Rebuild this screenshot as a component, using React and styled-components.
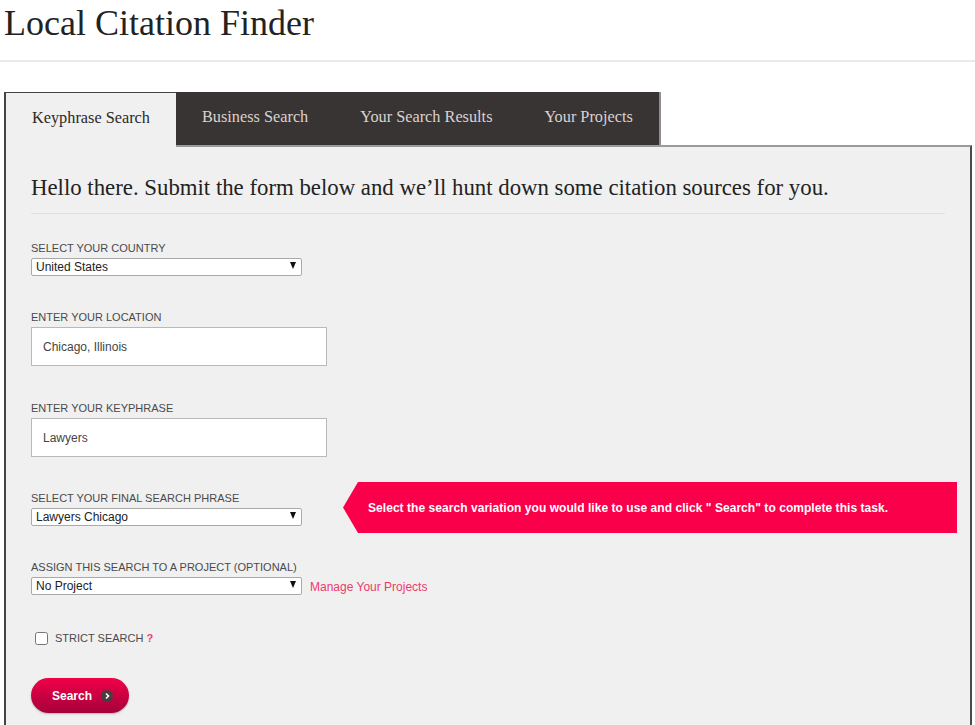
import React from 'react'
import styled, { createGlobalStyle } from 'styled-components'

const GlobalStyle = createGlobalStyle`
    body {
        margin: 0;
        background: #ffffff;
        font-family: "Liberation Sans", Arial, sans-serif;
    }
`

const Page = styled.div`
    width: 975px;
`

const Header = styled.header`
    border-bottom: 2px solid #e8ebeb;
    padding: 0 0 14px 4px;
`

const Title = styled.h1`
    margin: 0;
    font-family: "Liberation Serif", serif;
    font-weight: 400;
    font-size: 36px;
    line-height: 46px;
    color: #222;
`

const Main = styled.main`
    padding: 30px 3px 0 4px;
`

const TabList = styled.nav`
    display: flex;
    width: fit-content;
    border-right: 2px solid #8e8e8e;
    position: relative;
    z-index: 1;
`

const Tab = styled.div`
    padding: 0 26px 4px;
    display: flex;
    align-items: center;
    font-family: "Liberation Serif", serif;
    font-size: 16.3px;
    color: ${({ $active }) => ($active ? '#2a2a2a' : '#d9d2cf')};
    background: ${({ $active }) => ($active ? '#f0f0f0' : '#393434')};
    border-top: 1px solid ${({ $active }) => ($active ? '#444' : '#393434')};
    border-left: ${({ $active }) => ($active ? '2px solid #444' : 'none')};
    margin-bottom: ${({ $active }) => ($active ? '-2px' : '0')};
    height: ${({ $active }) => ($active ? '50px' : '48px')};
`

const Panel = styled.section`
    background: #f0f0f0;
    border-top: 2px solid #9a9a9a;
    border-left: 2px solid #444;
    border-right: 2px solid #4a4a4a;
    padding: 27px 25px 20px;
    min-height: 560px;
`

const Intro = styled.h2`
    margin: 0;
    padding-bottom: 11px;
    border-bottom: 1px solid #dde1e3;
    font-family: "Liberation Serif", serif;
    font-weight: 400;
    font-size: 22.8px;
    line-height: 28px;
    color: #222;
`

const Form = styled.form`
    display: flex;
    flex-direction: column;
    gap: 35px;
    padding-top: 27px;
`

const Row = styled.div`
    display: flex;
    align-items: ${({ $align }) => $align || 'center'};
    margin-top: ${({ $shift }) => $shift || 0}px;
`

const Field = styled.div`
    display: flex;
    flex-direction: column;
    gap: ${({ $gap }) => $gap || 2}px;
`

const Label = styled.label`
    font-size: 11px;
    line-height: 14px;
    text-transform: uppercase;
    color: #4a4a4a;
`

const SelectWrap = styled.div`
    position: relative;
    width: 271px;
    height: 18px;
`

const Select = styled.select`
    appearance: none;
    width: 100%;
    height: 100%;
    margin: 0;
    padding: 0 0 0 4px;
    border: 1px solid #a9a9a9;
    border-radius: 2px;
    background: #fff;
    font-family: "Liberation Sans", Arial, sans-serif;
    font-size: 12px;
    color: #222;
    box-sizing: border-box;
`

const Arrow = styled.span`
    position: absolute;
    right: 6px;
    top: 5px;
    width: 0;
    height: 0;
    border-left: 3.5px solid transparent;
    border-right: 3.5px solid transparent;
    border-top: 7px solid #111;
    pointer-events: none;
`

const TextInput = styled.input`
    width: 296px;
    height: 39px;
    margin: 0;
    padding: 0 11px;
    box-sizing: border-box;
    border: 1px solid #b9b9b9;
    background: #fff;
    font-family: "Liberation Sans", Arial, sans-serif;
    font-size: 12px;
    color: #444;
`

const Callout = styled.div`
    flex-shrink: 0;
    margin: -8px 0 -8px 41px;
    width: 614px;
    height: 51px;
    display: flex;
    align-items: center;
    padding-left: 25px;
    box-sizing: border-box;
    background: #fa004b;
    clip-path: polygon(15px 0, 100% 0, 100% 100%, 15px 100%, 0 50%);
    color: #fff;
    font-weight: 700;
    font-size: 12px;
    letter-spacing: 0.05px;
`

const ManageLink = styled.a`
    margin: 3px 0 0 8px;
    font-size: 12px;
    color: #ee3a6c;
    text-decoration: none;
    line-height: 14px;
    align-self: flex-end;
`

const CheckRow = styled.label`
    display: flex;
    align-items: center;
    gap: 7px;
    margin-top: 2px;
    padding-left: 4px;
    font-size: 11px;
    line-height: 14px;
    text-transform: uppercase;
    color: #4a4a4a;
`

const Checkbox = styled.input`
    margin: 0;
    width: 13px;
    height: 13px;
`

const Help = styled.span`
    color: #f03e6e;
    font-weight: 700;
    margin-left: 3px;
`

const SearchButton = styled.button`
    align-self: flex-start;
    margin-top: -2px;
    width: 98px;
    height: 35px;
    border: none;
    border-radius: 18px;
    background: linear-gradient(#f10048, #a5003b);
    box-shadow: 0 1px 2px rgba(0, 0, 0, 0.25);
    display: flex;
    align-items: center;
    gap: 9px;
    padding: 0 0 0 21px;
    color: #fff;
    font-family: "Liberation Sans", Arial, sans-serif;
    font-weight: 700;
    font-size: 12px;
`

const Chevron = () => (
    <svg width="12" height="12" viewBox="0 0 12 12">
        <circle cx="6" cy="6" r="6" fill="#4b3c40" />
        <path d="M5 3.5 L7.5 6 L5 8.5" stroke="#fff" strokeWidth="1.6" fill="none" />
    </svg>
)

const DropDown = ({ value }) => (
    <SelectWrap>
        <Select defaultValue={value}>
            <option>{value}</option>
        </Select>
        <Arrow />
    </SelectWrap>
)

const tabs = ['Keyphrase Search', 'Business Search', 'Your Search Results', 'Your Projects']

const App = () => {
  return (
    <Page>
        <GlobalStyle />
        <Header>
            <Title>Local Citation Finder</Title>
        </Header>
        <Main>
            <TabList>
                {tabs.map((t, i) => (
                    <Tab key={t} $active={i === 0}>{t}</Tab>
                ))}
            </TabList>
            <Panel>
                <Intro>Hello there. Submit the form below and we’ll hunt down some citation sources for you.</Intro>
                <Form onSubmit={e => e.preventDefault()}>
                    <Field>
                        <Label>Select your country</Label>
                        <DropDown value="United States" />
                    </Field>
                    <Field $gap={3}>
                        <Label>Enter your location</Label>
                        <TextInput defaultValue="Chicago, Illinois" />
                    </Field>
                    <Field $gap={3}>
                        <Label>Enter your keyphrase</Label>
                        <TextInput defaultValue="Lawyers" />
                    </Field>
                    <Row $shift={-2}>
                        <Field>
                            <Label>Select your final search phrase</Label>
                            <DropDown value="Lawyers Chicago" />
                        </Field>
                        <Callout>Select the search variation you would like to use and click " Search" to complete this task.</Callout>
                    </Row>
                    <Row>
                        <Field>
                            <Label>Assign this search to a project (optional)</Label>
                            <DropDown value="No Project" />
                        </Field>
                        <ManageLink href="#">Manage Your Projects</ManageLink>
                    </Row>
                    <CheckRow>
                        <Checkbox type="checkbox" />
                        <span>Strict Search<Help>?</Help></span>
                    </CheckRow>
                    <SearchButton type="submit">Search <Chevron /></SearchButton>
                </Form>
            </Panel>
        </Main>
    </Page>
  )
}

export default App
